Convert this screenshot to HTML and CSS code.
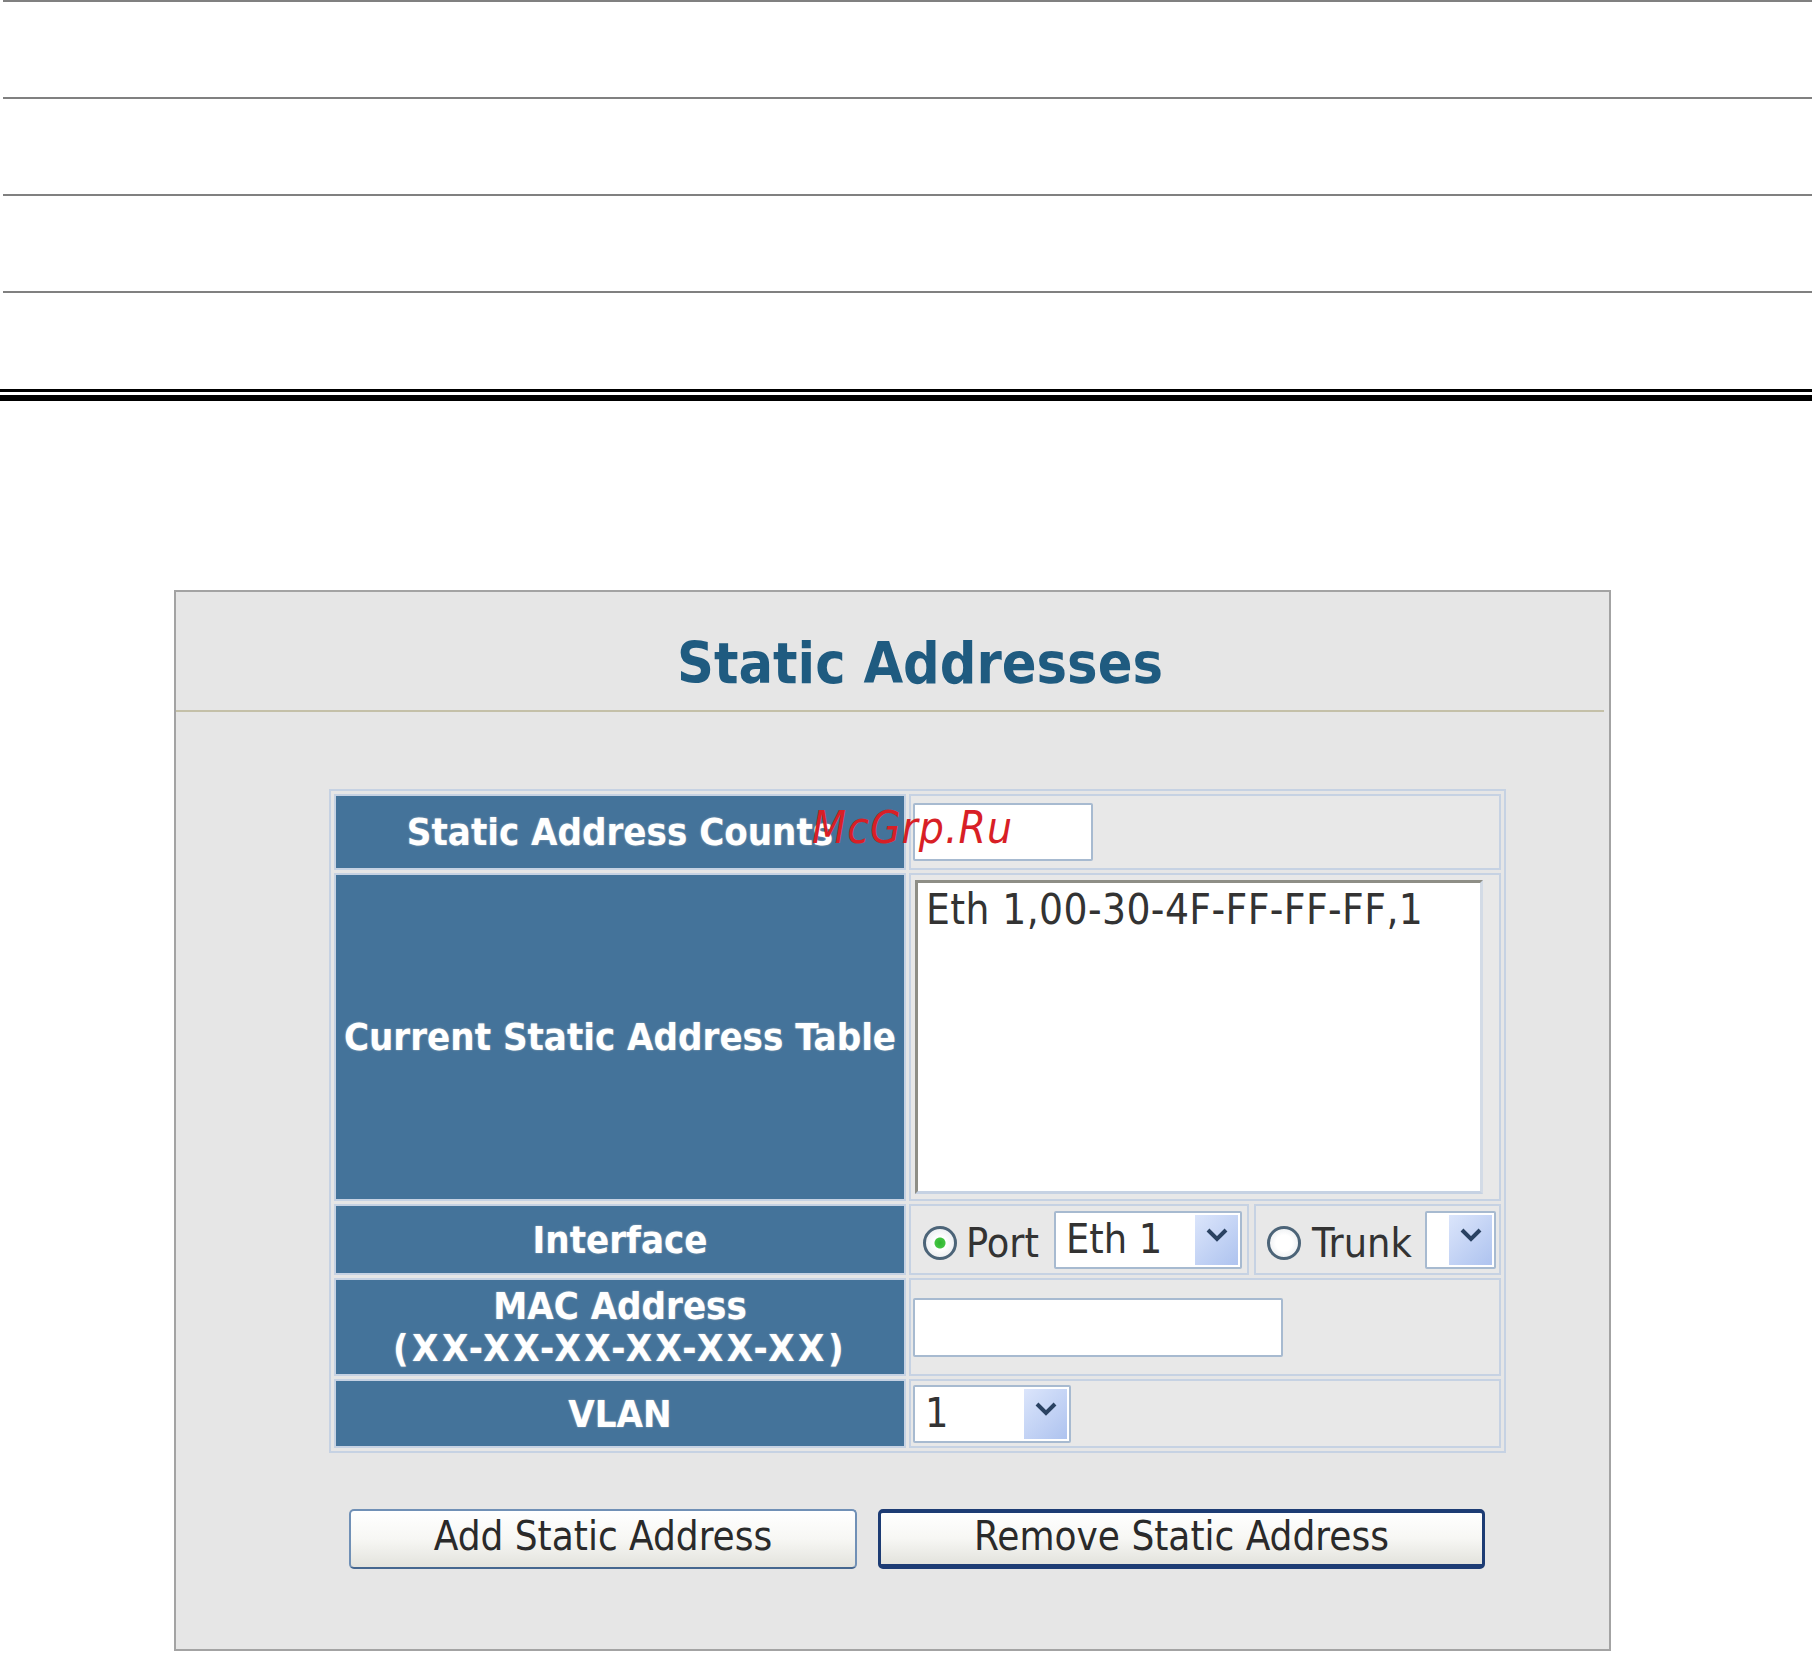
FILE: index.html
```html
<!DOCTYPE html>
<html lang="en">
  <head>
    <meta charset="UTF-8" />
    <meta name="viewport" content="width=device-width, initial-scale=1.0" />
    <title>Static Addresses</title>
    <link rel="stylesheet" href="styles.css">
  </head>
  <body>
    <div class="rules">
      <div class="rule"></div>
      <div class="rule"></div>
      <div class="rule"></div>
      <div class="rule"></div>
    </div>
    <div class="double-rule"></div>

    <div class="panel">
      <header class="panel-head">
        <h1>Static Addresses</h1>
      </header>

      <table class="form-table">
        <tr class="row-count">
          <th>Static Address Counts</th>
          <td><input class="text count" type="text" /></td>
        </tr>
        <tr class="row-list">
          <th>Current Static Address Table</th>
          <td class="list-cell">
            <textarea class="list" readonly>Eth 1,00-30-4F-FF-FF-FF,1</textarea>
          </td>
        </tr>
        <tr class="row-iface">
          <th>Interface</th>
          <td class="split">
            <div class="split-wrap">
              <div class="part port">
                <input class="radio" type="radio" name="iface" id="ifacePort" checked />
                <label for="ifacePort">Port</label>
                <div class="select port-select">
                  <select><option>Eth 1</option></select>
                  <span class="arrow"><svg viewBox="0 0 22 14" width="22" height="14"><path d="M2 2 L11 11 L20 2" fill="none" stroke="#2a4262" stroke-width="4"/></svg></span>
                </div>
              </div>
              <div class="part trunk">
                <input class="radio" type="radio" name="iface" id="ifaceTrunk" />
                <label for="ifaceTrunk">Trunk</label>
                <div class="select trunk-select">
                  <select><option></option></select>
                  <span class="arrow"><svg viewBox="0 0 22 14" width="22" height="14"><path d="M2 2 L11 11 L20 2" fill="none" stroke="#2a4262" stroke-width="4"/></svg></span>
                </div>
              </div>
            </div>
          </td>
        </tr>
        <tr class="row-mac">
          <th>MAC Address<br /><span class="mask">(XX-XX-XX-XX-XX-XX)</span></th>
          <td><input class="text mac" type="text" /></td>
        </tr>
        <tr class="row-vlan">
          <th>VLAN</th>
          <td>
            <div class="select vlan-select">
              <select><option>1</option></select>
              <span class="arrow"><svg viewBox="0 0 22 14" width="22" height="14"><path d="M2 2 L11 11 L20 2" fill="none" stroke="#2a4262" stroke-width="4"/></svg></span>
            </div>
          </td>
        </tr>
      </table>

      <div class="actions">
        <button class="btn btn-add">Add Static Address</button>
        <button class="btn btn-remove">Remove Static Address</button>
      </div>
    </div>

    <div class="watermark">McGrp.Ru</div>
  </body>
</html>
```

FILE: styles.css
```css
body {
  margin: 0;
  background-color: #fff;
  font-family: "DejaVu Sans Condensed", "DejaVu Sans", sans-serif;
  color: #333;
}
.rules {
  display: flex;
  flex-direction: column;
  gap: 95px;
  padding-left: 3px;
}
.rule {
  height: 2px;
  background-color: #808080;
}
.double-rule {
  height: 3px;
  margin-top: 96px;
  border-top: 3px solid #000;
  border-bottom: 6px solid #000;
}
.panel {
  box-sizing: border-box;
  width: 1437px;
  height: 1061px;
  margin: 189px 0 0 174px;
  border: 2px solid #a3a3a3;
  background-color: #e6e6e6;
}
.panel-head {
  box-sizing: border-box;
  height: 120px;
  margin-right: 5px;
  padding: 38px 0 0 60px;
  border-bottom: 2px solid #c4c0a8;
  text-align: center;
}
h1 {
  margin: 0;
  font-size: 57px;
  font-weight: bold;
  line-height: 1.164;
  color: #1f5b80;
}
.form-table {
  table-layout: fixed;
  width: 1177px;
  margin: 77px 0 0 153px;
  border: 2px solid #c6d2e3;
  border-spacing: 3px;
}
.form-table th,
.form-table td {
  padding: 0;
  border: 2px solid #c6d2e3;
}
.form-table th {
  width: 568px;
  background-color: #44739a;
  color: #fff;
  font-size: 38px;
  font-weight: bold;
  line-height: 42px;
  text-align: center;
  white-space: nowrap;
  text-shadow: 0 0 2px rgba(255, 240, 220, 0.5);
}
.mask {
  letter-spacing: 3.5px;
}
.form-table td {
  background-color: #e8e8e8;
  padding: 0 2px;
}
.row-count {
  height: 76px;
}
.row-list {
  height: 328px;
}
.row-iface {
  height: 71px;
}
.row-mac {
  height: 98px;
}
.row-vlan {
  height: 69px;
}
.text {
  box-sizing: border-box;
  display: block;
  border: 2px solid #a7bad0;
  border-radius: 2px;
  background-color: #fff;
  font-family: inherit;
  font-size: 40px;
}
.count {
  width: 180px;
  height: 58px;
}
.mac {
  width: 370px;
  height: 59px;
}
.form-table td.list-cell {
  vertical-align: top;
  padding: 5px 0 0 4px;
}
.list {
  box-sizing: border-box;
  display: block;
  width: 568px;
  height: 314px;
  margin: 0;
  padding: 2px 8px;
  border: 3px solid;
  border-color: #8e8e86 #d3dbe6 #c6d2e3 #8e8e86;
  background-color: #fff;
  color: #333;
  font-family: inherit;
  font-size: 42px;
  line-height: 1.2;
  letter-spacing: 0.4px;
  resize: none;
  overflow: hidden;
  outline: none;
}
.form-table td.split {
  padding: 0;
  border: 0;
  background: none;
}
.split-wrap {
  display: flex;
  gap: 5px;
  height: 71px;
}
.part {
  box-sizing: border-box;
  display: flex;
  align-items: center;
  border: 2px solid #c6d2e3;
  background-color: #e8e8e8;
  font-size: 41px;
}
.port {
  width: 340px;
}
.trunk {
  flex: 1;
}
.radio {
  appearance: none;
  box-sizing: border-box;
  width: 34px;
  height: 34px;
  margin: 6px 9px 0 12px;
  border: 3px solid #4c6478;
  border-radius: 50%;
  background: radial-gradient(circle, #ffffff 40%, #e2e6ea 100%);
  flex-shrink: 0;
}
.trunk .radio {
  margin-left: 11px;
  margin-right: 11px;
}
.radio:checked {
  background: radial-gradient(circle, #2fb52f 0, #42c442 5px, #ffffff 6px, #e2e6ea 100%);
}
.part label {
  margin-top: 6px;
}
.select {
  box-sizing: border-box;
  display: flex;
  height: 58px;
  padding: 2px;
  border: 2px solid #a7bad0;
  border-radius: 2px;
  background-color: #fff;
}
.select select {
  flex: 1;
  min-width: 0;
  appearance: none;
  border: 0;
  padding: 0 0 6px 8px;
  background: transparent;
  color: #333;
  font-family: inherit;
  font-size: 41px;
  outline: none;
}
.arrow {
  display: flex;
  align-items: center;
  justify-content: center;
  width: 43px;
  padding-bottom: 10px;
  box-sizing: border-box;
  background: linear-gradient(135deg, #dbe5fb, #aec3ef);
  flex-shrink: 0;
}
.port-select {
  width: 188px;
  margin: 0 5px 0 auto;
}
.trunk-select {
  width: 71px;
  margin: 0 3px 0 auto;
}
.vlan-select {
  width: 158px;
}
.actions {
  display: flex;
  gap: 21px;
  margin-top: 56px;
  padding-left: 173px;
}
.btn {
  box-sizing: border-box;
  height: 60px;
  padding: 0 0 6px;
  border: 2px solid;
  border-color: #7090b6 #7090b6 #46678f;
  border-radius: 5px;
  background: linear-gradient(#ffffff, #f7f7f4 50%, #e3e3dd);
  color: #2a2a2a;
  font-family: inherit;
  font-size: 40px;
  cursor: pointer;
}
.btn-add {
  width: 508px;
}
.btn-remove {
  width: 607px;
  border-width: 4px 3px 5px;
  border-color: #1d3c74;
}
.watermark {
  position: absolute;
  left: 812px;
  top: 806px;
  font-size: 44px;
  font-style: italic;
  line-height: 1;
  letter-spacing: 1px;
  color: #d81f26;
}
```
